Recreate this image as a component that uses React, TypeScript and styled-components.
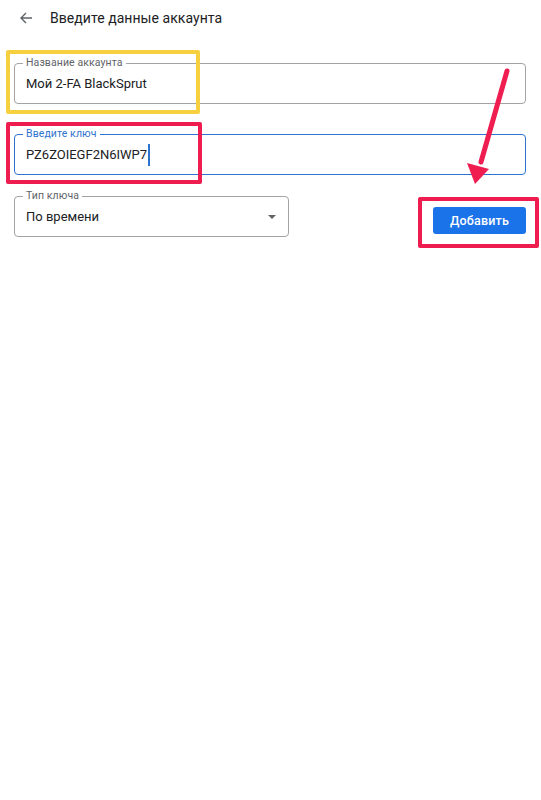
import React from "react";
import styled, { createGlobalStyle } from "styled-components";

const Global = createGlobalStyle`
  html, body { margin: 0; padding: 0; background: #ffffff; }
  body { font-family: Roboto, "Noto Sans", Arial, sans-serif; -webkit-font-smoothing: antialiased; }
`;

const Page = styled.div`
  position: relative;
  width: 541px;
  height: 800px;
  background: #fff;
  overflow: hidden;
`;

const Header = styled.header`
  display: flex;
  align-items: center;
  height: 35px;
  padding-left: 19px;
  gap: 17px;
`;

const BackButton = styled.span`
  display: flex;
  width: 14px;
  height: 14px;
  color: #5f6368;
`;

const Title = styled.h1`
  margin: 0;
  font-size: 14px;
  font-weight: 400;
  color: #202124;
  letter-spacing: 0.05px;
`;

const Form = styled.div`
  display: flex;
  flex-direction: column;
  padding: 28px 15px 0 14px;
`;

const Field = styled.div<{ $focused?: boolean; $width?: string; $mt?: number }>`
  position: relative;
  box-sizing: border-box;
  height: 41px;
  width: ${(p) => p.$width || "100%"};
  margin-top: ${(p) => p.$mt || 0}px;
  border: 1px solid ${(p) => (p.$focused ? "#2f73d0" : "#a3a3a3")};
  border-radius: 4px;
  display: flex;
  align-items: center;
  padding: 0 11px;
`;

const Label = styled.span<{ $focused?: boolean }>`
  position: absolute;
  top: -7px;
  left: 8px;
  padding: 0 3px;
  background: #fff;
  font-size: 10.5px;
  line-height: 12px;
  letter-spacing: 0.1px;
  color: ${(p) => (p.$focused ? "#2f73d0" : "#5f6368")};
`;

const Value = styled.span`
  font-size: 13px;
  color: #202124;
  display: flex;
  align-items: center;
`;

const Caret = styled.span`
  display: inline-block;
  width: 1.5px;
  height: 22px;
  margin-left: 1px;
  background: #2f73d0;
`;

const DropTriangle = styled.span`
  position: absolute;
  right: 12px;
  top: 18px;
  width: 0;
  height: 0;
  border-left: 4px solid transparent;
  border-right: 4px solid transparent;
  border-top: 4px solid #5f6368;
`;

const Row = styled.div`
  display: flex;
  justify-content: space-between;
  align-items: flex-start;
  margin-top: 21px;
`;

const AddButton = styled.button`
  margin-top: 11px;
  width: 93px;
  height: 27px;
  border: none;
  border-radius: 3px;
  background: #1a73e8;
  color: #fff;
  font-family: Roboto, Arial, sans-serif;
  font-size: 12.5px;
  font-weight: 500;
  letter-spacing: 0.2px;
  padding: 0;
`;

const Highlight = styled.div<{ $color: string; $x: number; $y: number; $w: number; $h: number }>`
  position: absolute;
  box-sizing: border-box;
  left: ${(p) => p.$x}px;
  top: ${(p) => p.$y}px;
  width: ${(p) => p.$w}px;
  height: ${(p) => p.$h}px;
  border: 4px solid ${(p) => p.$color};
  border-radius: 2px;
  pointer-events: none;
`;

const ArrowLayer = styled.svg`
  position: absolute;
  left: 0;
  top: 0;
  pointer-events: none;
`;

export default function App() {
  return (
    <Page>
      <Global />
      <Header>
        <BackButton>
          <svg width="14" height="14" viewBox="0 0 14 14">
            <path d="M13 7H2M7 2L2 7l5 5" fill="none" stroke="#5f6368" strokeWidth="1.4" />
          </svg>
        </BackButton>
        <Title>Введите данные аккаунта</Title>
      </Header>
      <Form>
        <Field>
          <Label>Название аккаунта</Label>
          <Value>Мой 2-FA BlackSprut</Value>
        </Field>
        <Field $focused $mt={30}>
          <Label $focused>Введите ключ</Label>
          <Value>
            PZ6ZOIEGF2N6IWP7
            <Caret />
          </Value>
        </Field>
        <Row>
          <Field $width="275px">
            <Label>Тип ключа</Label>
            <Value>По времени</Value>
            <DropTriangle />
          </Field>
          <AddButton>Добавить</AddButton>
        </Row>
      </Form>

      <Highlight $color="#f6d03f" $x={6} $y={50} $w={194} $h={64} />
      <Highlight $color="#ee1c4f" $x={6} $y={122} $w={196} $h={62} />
      <Highlight $color="#ee1c4f" $x={418} $y={197} $w={121} $h={51} />

      <ArrowLayer width="541" height="800" viewBox="0 0 541 800">
        <line x1="507" y1="71" x2="481" y2="162" stroke="#ef1d50" strokeWidth="5" strokeLinecap="round" />
        <polygon points="475,184 467,163 489,169" fill="#ef1d50" />
      </ArrowLayer>
    </Page>
  );
}
